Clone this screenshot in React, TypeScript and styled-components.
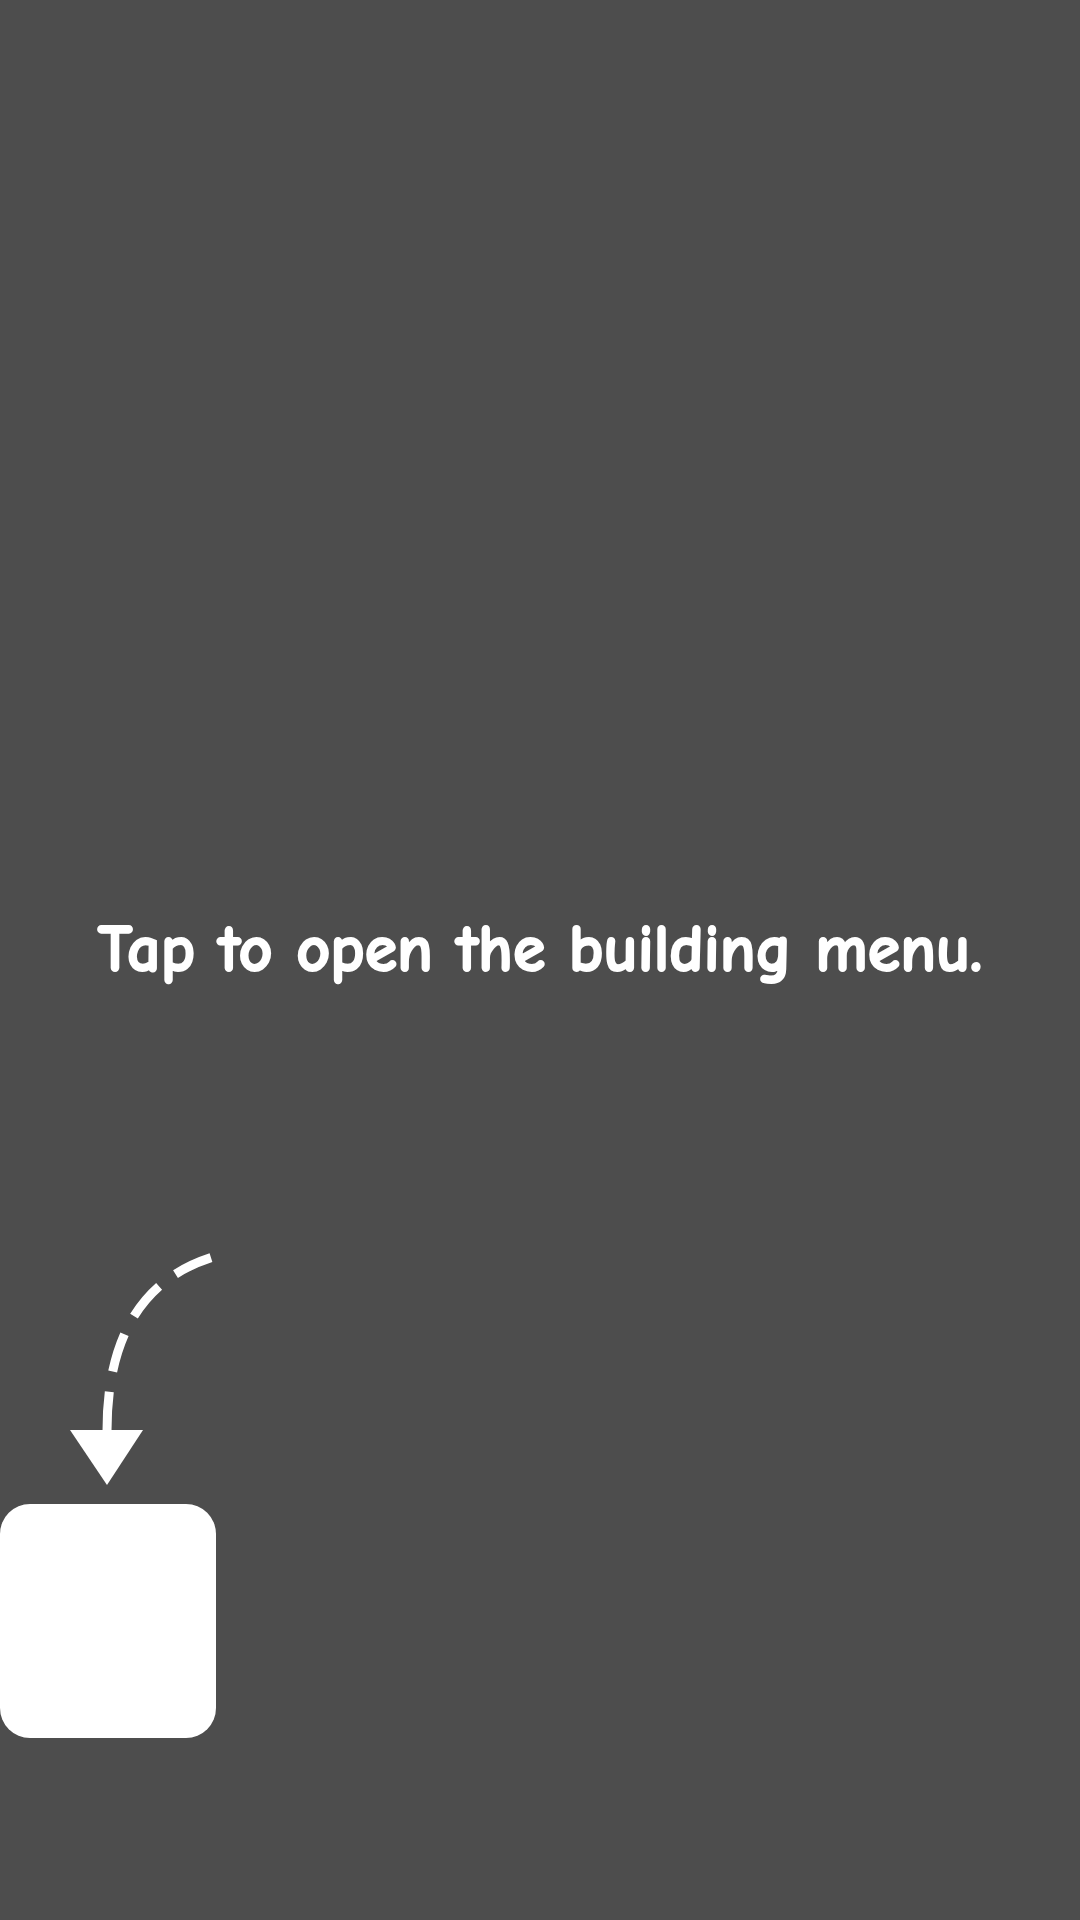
import React from "react";
import styled, { createGlobalStyle } from "styled-components";

const Global = createGlobalStyle`
  html, body { margin: 0; padding: 0; background: #4d4d4d; }
  #root { width: 1080px; }
`;

const Screen = styled.div`
  width: 1080px;
  height: 1920px;
  background: #4d4d4d;
  display: flex;
  flex-direction: column;
  overflow: hidden;
`;

const Prompt = styled.div`
  margin-top: 910px;
  text-align: center;
  color: #ffffff;
  font-family: "Comic Sans MS", "Comic Neue", "DejaVu Sans", sans-serif;
  font-weight: 700;
  font-size: 66px;
  line-height: 80px;
  white-space: nowrap;
  -webkit-text-stroke: 2px #ffffff;
`;

const ArrowArt = styled.svg`
  display: block;
  margin-top: 255px;
  width: 230px;
  height: 250px;
`;

const BuildButton = styled.button`
  display: block;
  margin-top: 9px;
  width: 216px;
  height: 234px;
  border: none;
  padding: 0;
  border-radius: 30px;
  background: #ffffff;
`;

export default function App() {
  return (
    <Screen>
      <Global />
      <Prompt>Tap to open the building menu.</Prompt>
      <ArrowArt viewBox="0 0 230 250">
        <path
          d="M107 186 Q107 45 213 12"
          fill="none"
          stroke="#ffffff"
          strokeWidth={9}
          pathLength={214}
          strokeDasharray="38 20"
        />
        <polygon points="70,185 143,185 107,240" fill="#ffffff" />
      </ArrowArt>
      <BuildButton aria-label="Building menu" />
    </Screen>
  );
}
